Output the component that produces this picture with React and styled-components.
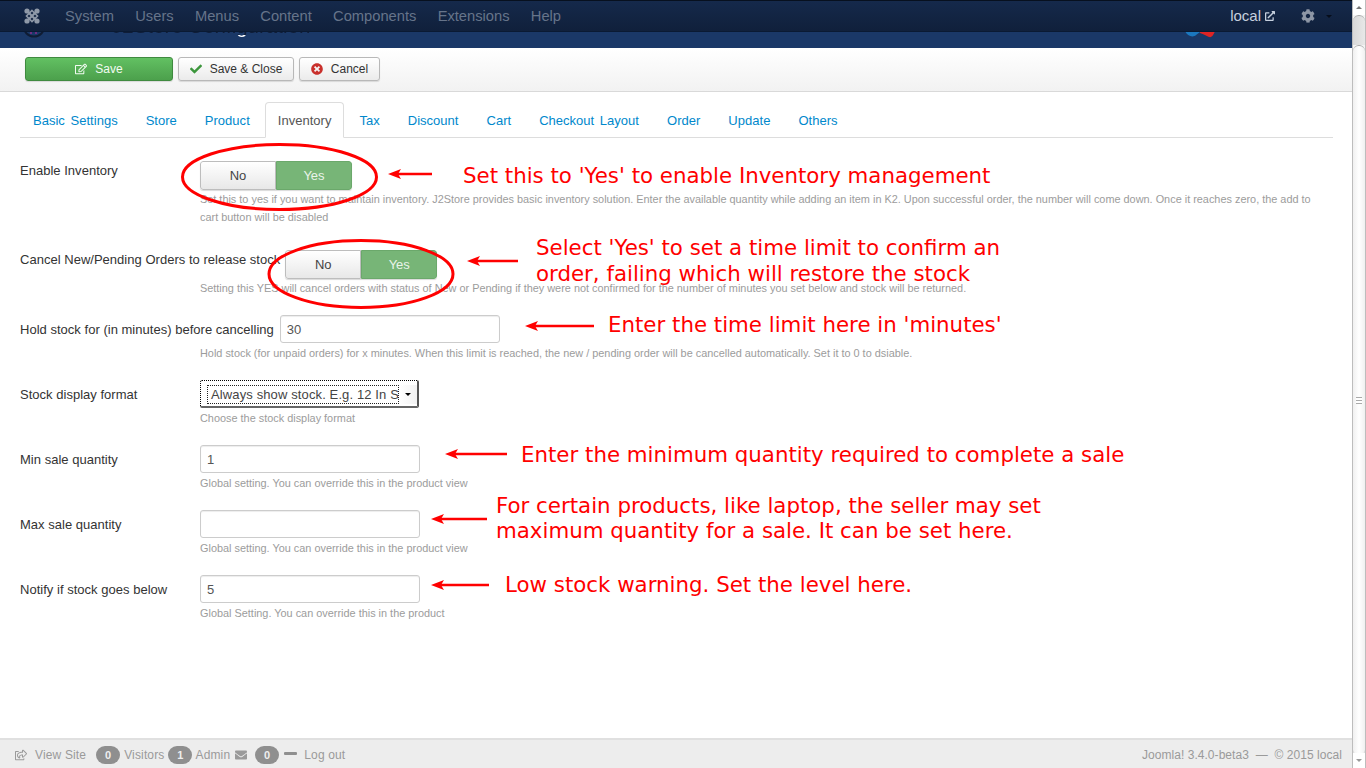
import React from 'react';
import styled, { createGlobalStyle } from 'styled-components';
import { FaCog, FaCheck, FaTimesCircle, FaRegEdit, FaEnvelope, FaRegShareSquare, FaExternalLinkAlt } from 'react-icons/fa';

const Global = createGlobalStyle`
  html, body { margin: 0; padding: 0; height: 100%; overflow: hidden; background: #fff; }
  body { font-family: "Liberation Sans", Arial, sans-serif; font-size: 13px; color: #333; }
  * { box-sizing: border-box; }
`;

const Shell = styled.div`
  display: flex;
  width: 1366px;
  height: 768px;
  position: relative;
  overflow: hidden;
`;
const Page = styled.div`
  flex: 1;
  min-width: 0;
  display: flex;
  flex-direction: column;
`;

/* fixed admin navbar lying over the scrolled page header */
const NavBar = styled.nav`
  position: absolute;
  top: 0;
  left: 0;
  right: 14px;
  height: 32px;
  z-index: 3;
  display: flex;
  align-items: center;
  padding: 0 0 1px 24px;
  border-top: 1px solid #07101f;
  border-bottom: 1px solid #0a1a33;
  background: linear-gradient(#15294b, #10203b);
`;
const Brand = styled.svg`
  width: 16px;
  height: 16px;
  margin-right: 25px;
  flex: none;
`;
const NavItem = styled.a`
  font-size: 14.7px;
  color: #66748a;
  margin-right: ${p => p.$gap ?? 21}px;
`;
const NavRight = styled.div`
  margin-left: auto;
  display: flex;
  align-items: center;
  color: #c6d0de;
  font-size: 15px;
`;
const LocalLink = styled.span`
  display: flex;
  align-items: center;
  gap: 4px;
  margin-right: 26px;
  svg { width: 10px; height: 10px; }
`;
const Gear = styled(FaCog)`
  width: 14px;
  height: 14px;
  color: #8d96a5;
`;
const Caret = styled.span`
  width: 0;
  height: 0;
  margin: 2px 20px 0 11px;
  border-left: 3px solid transparent;
  border-right: 3px solid transparent;
  border-top: 3px solid #060d1a;
`;

const Header = styled.header`
  height: 48px;
  flex: none;
  background: #1a3867;
  display: flex;
  align-items: flex-end;
  justify-content: space-between;
  overflow: hidden;
`;
const HeaderLogo = styled.svg`
  width: 24px;
  height: 24px;
  margin: 0 0 10px 22px;
  flex: none;
`;
const HeaderTitle = styled.h1`
  margin: 0 0 10px 66px;
  font-size: 20.5px;
  font-weight: 400;
  line-height: 24px;
  color: transparent;
  background: linear-gradient(#0f1d38 86%, #ffffff 86%);
  -webkit-background-clip: text;
  background-clip: text;
  white-space: nowrap;
  flex: 1;
`;
const HeaderMark = styled.svg`
  width: 32px;
  height: 8px;
  margin: 0 135px 9px 0;
  flex: none;
`;

const Toolbar = styled.div`
  flex: none;
  height: 44px;
  display: flex;
  gap: 5px;
  padding: 9px 0 0 25px;
  background: linear-gradient(#ffffff, #f2f2f2);
  border-bottom: 1px solid #d9d9d9;
`;
const ToolButton = styled.button`
  height: 24px;
  width: ${p => p.$w}px;
  padding: 0;
  display: flex;
  align-items: center;
  justify-content: center;
  gap: 8px;
  font: 12px "Liberation Sans", Arial, sans-serif;
  border-radius: 3px;
  color: ${p => (p.$primary ? '#f2fbf2' : '#333')};
  border: 1px solid ${p => (p.$primary ? '#3f8a3f' : '#b8b8b8')};
  background: ${p => (p.$primary ? 'linear-gradient(#62c062, #4ca04c)' : 'linear-gradient(#ffffff, #ebebeb)')};
  box-shadow: 0 1px 1px rgba(0, 0, 0, 0.12);
  svg { width: 12px; height: 12px; color: ${p => p.$icon || 'inherit'}; }
`;

const Content = styled.main`
  flex: 1;
  padding: 10px 19px 0 20px;
`;
const Tabs = styled.ul`
  display: flex;
  list-style: none;
  margin: 0 0 23px;
  padding: 0;
  height: 36px;
  border-bottom: 1px solid #ddd;
`;
const Tab = styled.li`
  height: 36px;
  padding: 0 12px;
  margin-right: 2px;
  line-height: 36px;
  font-size: 13px;
  letter-spacing: 0.02px;
  word-spacing: 2px;
  border: 1px solid ${p => (p.$active ? '#ddd' : 'transparent')};
  border-bottom-color: ${p => (p.$active ? '#fff' : 'transparent')};
  border-radius: 4px 4px 0 0;
  color: ${p => (p.$active ? '#555' : '#0088cc')};
  background: ${p => (p.$active ? '#fff' : 'transparent')};
`;

const Row = styled.div`
  margin-bottom: ${p => p.$mb}px;
`;
const Controls = styled.div`
  display: flex;
  align-items: flex-start;
`;
const Label = styled.label`
  min-width: 175px;
  margin-right: ${p => p.$gap ?? 5}px;
  padding-top: ${p => (p.$field ? 6 : 1)}px;
  line-height: 18px;
  font-size: 13px;
  letter-spacing: 0.02px;
  color: #333;
  white-space: nowrap;
`;
const Help = styled.p`
  margin: ${p => p.$mt ?? 1}px 6px 0 180px;
  font-size: 10.9px;
  line-height: 18px;
  color: #9c9c9c;
`;
const Toggle = styled.div`
  display: flex;
  width: 152px;
  height: 29px;
  border-radius: 3px;
  overflow: hidden;
  box-shadow: 0 1px 1px rgba(0, 0, 0, 0.15);
`;
const ToggleOption = styled.span`
  flex: 1;
  display: flex;
  align-items: center;
  justify-content: center;
  font-size: 13px;
  color: ${p => (p.$on ? '#e9f3e9' : '#444')};
  background: ${p => (p.$on ? '#77b577' : 'linear-gradient(#ffffff, #e8e8e8)')};
  border: 1px solid ${p => (p.$on ? '#6ba86b' : '#bdbdbd')};
  border-radius: ${p => (p.$on ? '0 3px 3px 0' : '3px 0 0 3px')};
`;
const TextInput = styled.input`
  width: 220px;
  height: 28px;
  padding: 4px 6px;
  font: 13px "Liberation Sans", Arial, sans-serif;
  color: #555;
  background: #fff;
  border: 1px solid #ccc;
  border-radius: 3px;
  box-shadow: inset 0 1px 1px rgba(0, 0, 0, 0.075);
  outline: none;
`;
const SelectBox = styled.div`
  width: 219px;
  height: 28px;
  display: flex;
  align-items: stretch;
  padding: 4px 0 2px 6px;
  border: 1px dotted #000;
  border-radius: 2px;
  border-right: 2px solid #555;
  border-bottom: 2px solid #666;
  background: #fff;
`;
const SelectValue = styled.span`
  flex: 1;
  min-width: 0;
  overflow: hidden;
  white-space: nowrap;
  line-height: 18px;
  padding-left: 3px;
  font-size: 13px;
  letter-spacing: 0.12px;
  color: #444;
  border: 1px dotted #222;
`;
const SelectArrow = styled.span`
  flex: none;
  width: 18px;
  display: flex;
  align-items: center;
  justify-content: center;
  background: linear-gradient(90deg, #fff, #f2f2f2);
  &::before {
    content: '';
    border-left: 3.5px solid transparent;
    border-right: 3.5px solid transparent;
    border-top: 3.5px solid #000;
  }
`;

const Footer = styled.footer`
  flex: none;
  height: 30px;
  display: flex;
  align-items: center;
  padding: 2px 10px 0 15px;
  background: #ededed;
  border-top: 2px solid #e0e0e0;
  font-size: 12px;
  letter-spacing: 0.15px;
  color: #9a9a9a;
`;
const FooterItem = styled.span`
  display: flex;
  align-items: center;
  margin-right: ${p => p.$mr ?? 0}px;
  gap: ${p => p.$gap ?? 0}px;
  svg { width: 12px; height: 12px; }
`;
const Badge = styled.span`
  width: 24px;
  height: 18px;
  display: flex;
  align-items: center;
  justify-content: center;
  border-radius: 9px;
  font-size: 11px;
  font-weight: 700;
  color: #eee;
  background: #8f8f8f;
`;
const Dash = styled.span`
  width: 13px;
  height: 3px;
  margin-bottom: 3px;
  border-radius: 1px;
  background: #8f8f8f;
`;
const Copyright = styled.span`
  margin-left: auto;
  letter-spacing: 0.05px;
`;

const Scrollbar = styled.aside`
  flex: none;
  width: 14px;
  display: flex;
  flex-direction: column;
  background: #f4f4f4;
  border-left: 1px solid #bdbdbd;
  border-right: 1px solid #bdbdbd;
`;
const ScrollButton = styled.span`
  flex: none;
  height: 15px;
  display: flex;
  align-items: center;
  justify-content: center;
  background: #fff;
  &::before {
    content: '';
    border-left: 3px solid transparent;
    border-right: 3px solid transparent;
    ${p => (p.$down ? 'border-top: 3px solid #999;' : 'border-bottom: 3px solid #777;')}
  }
`;
const ScrollTrough = styled.span`
  flex: none;
  height: 30px;
  background: linear-gradient(90deg, #d8d8d8, #e8e8e8);
  border-radius: 6px 6px 0 0;
  border-top: 1px solid #a8a8a8;
`;
const ScrollThumb = styled.span`
  flex: 1;
  display: flex;
  align-items: center;
  justify-content: center;
  margin-bottom: -3px;
  border-top: 1px solid #a8a8a8;
  border-bottom: 1px solid #a8a8a8;
  border-radius: 6px;
  background: linear-gradient(90deg, #f0f0f0, #ffffff 50%, #f0f0f0);
`;
const Grip = styled.span`
  width: 6px;
  height: 7px;
  border-top: 1px solid #aaa;
  border-bottom: 1px solid #aaa;
  background: linear-gradient(#fff 2px, #aaa 2px, #aaa 3px, #fff 3px);
`;

/* red hand-drawn annotations lying over the form */
const Markup = styled.svg`
  position: absolute;
  inset: 0;
  z-index: 2;
  pointer-events: none;
`;
const Note = styled.div`
  position: absolute;
  z-index: 2;
  left: ${p => p.$x}px;
  top: ${p => p.$y}px;
  font-family: "DejaVu Sans", sans-serif;
  font-size: 21.33px;
  line-height: ${p => p.$lh ?? 26}px;
  color: #ff0000;
  white-space: pre;
`;

const NAV = ['System', 'Users', 'Menus', 'Content', 'Components', 'Extensions', 'Help'];
const TABS = ['Basic Settings', 'Store', 'Product', 'Inventory', 'Tax', 'Discount', 'Cart', 'Checkout Layout', 'Order', 'Update', 'Others'];
const ARROWS = [[432, 388, 174], [518, 467, 261], [594, 525, 326], [507, 445, 454], [487, 431, 519], [489, 431, 585]];
const NOTES = [
  [463, 163, "Set this to 'Yes' to enable Inventory management"],
  [536, 235, "Select 'Yes' to set a time limit to confirm an\norder, failing which will restore the stock"],
  [608, 312, "Enter the time limit here in 'minutes'"],
  [521, 442, 'Enter the minimum quantity required to complete a sale'],
  [496, 493, 'For certain products, like laptop, the seller may set\nmaximum quantity for a sale. It can be set here.', 25],
  [505, 572, 'Low stock warning. Set the level here.'],
];

const YesNo = () => (
  <Toggle>
    <ToggleOption>No</ToggleOption>
    <ToggleOption $on>Yes</ToggleOption>
  </Toggle>
);

export default function App() {
  return (
    <Shell>
      <Global />
      <NavBar>
        <Brand viewBox="0 0 16 16">
          <g stroke="#8f99a8" fill="none" strokeLinecap="round">
            <path d="M3 3 L13 13 M13 3 L3 13" strokeWidth="2.2" />
            <path d="M8 2.5 L13.5 8 L8 13.5 L2.5 8 Z" strokeWidth="1.6" />
          </g>
          <g fill="#8f99a8">
            <circle cx="3" cy="3" r="2.6" />
            <circle cx="13" cy="3" r="2.6" />
            <circle cx="3" cy="13" r="2.6" />
            <circle cx="13" cy="13" r="2.6" />
          </g>
        </Brand>
        {NAV.map(n => <NavItem key={n} $gap={21.3}>{n}</NavItem>)}
        <NavRight>
          <LocalLink>local <FaExternalLinkAlt /></LocalLink>
          <Gear />
          <Caret />
        </NavRight>
      </NavBar>
      <Page>
        <Header>
          <HeaderLogo viewBox="0 0 24 24">
            <circle cx="12" cy="12" r="10.5" fill="#1a3867" stroke="#0f1c33" strokeWidth="2" />
            <circle cx="9" cy="19" r="1" fill="#8a2a8a" />
            <circle cx="14" cy="19" r="1" fill="#8a2a8a" />
          </HeaderLogo>
          <HeaderTitle>J2Store Configuration</HeaderTitle>
          <HeaderMark viewBox="0 0 32 8">
            <path d="M0 0 C2 5 8 7 11 4 L15 1 L15 0 Z" fill="#1b78c0" />
            <path d="M15 0 L30 0 C29 3 27 7 24 6 C21 5 19 3 15 2 Z" fill="#e02424" />
          </HeaderMark>
        </Header>
        <Toolbar>
          <ToolButton $primary $w={148}><FaRegEdit />Save</ToolButton>
          <ToolButton $w={116} $icon="#3c963c"><FaCheck />Save &amp; Close</ToolButton>
          <ToolButton $w={81} $icon="#c9302c"><FaTimesCircle />Cancel</ToolButton>
        </Toolbar>
        <Content>
          <Tabs>
            {TABS.map(t => <Tab key={t} $active={t === 'Inventory'}>{t}</Tab>)}
          </Tabs>
          <Row $mb={24}>
            <Controls>
              <Label>Enable Inventory</Label>
              <YesNo />
            </Controls>
            <Help $mt={0}>Set this to yes if you want to maintain inventory. J2Store provides basic inventory solution. Enter the available quantity while adding an item in K2. Upon successful order, the number will come down. Once it reaches zero, the add to cart button will be disabled</Help>
          </Row>
          <Row $mb={18}>
            <Controls>
              <Label>Cancel New/Pending Orders to release stock</Label>
              <YesNo />
            </Controls>
            <Help $mt={0}>Setting this YES will cancel orders with status of New or Pending if they were not confirmed for the number of minutes you set below and stock will be returned.</Help>
          </Row>
          <Row $mb={18}>
            <Controls>
              <Label $field $gap={6}>Hold stock for (in minutes) before cancelling</Label>
              <TextInput readOnly value="30" />
            </Controls>
            <Help>Hold stock (for unpaid orders) for x minutes. When this limit is reached, the new / pending order will be cancelled automatically. Set it to 0 to dsiable.</Help>
          </Row>
          <Row $mb={18}>
            <Controls>
              <Label $field>Stock display format</Label>
              <SelectBox>
                <SelectValue>Always show stock. E.g. 12 In Stock</SelectValue>
                <SelectArrow />
              </SelectBox>
            </Controls>
            <Help>Choose the stock display format</Help>
          </Row>
          <Row $mb={18}>
            <Controls>
              <Label $field>Min sale quantity</Label>
              <TextInput readOnly value="1" />
            </Controls>
            <Help>Global setting. You can override this in the product view</Help>
          </Row>
          <Row $mb={18}>
            <Controls>
              <Label $field>Max sale quantity</Label>
              <TextInput readOnly value="" />
            </Controls>
            <Help>Global setting. You can override this in the product view</Help>
          </Row>
          <Row $mb={0}>
            <Controls>
              <Label $field>Notify if stock goes below</Label>
              <TextInput readOnly value="5" />
            </Controls>
            <Help>Global Setting. You can override this in the product</Help>
          </Row>
        </Content>
        <Footer>
          <FooterItem $mr={10} $gap={8}><FaRegShareSquare />View Site</FooterItem>
          <FooterItem $mr={4} $gap={4}><Badge>0</Badge>Visitors</FooterItem>
          <FooterItem $mr={5} $gap={3}><Badge>1</Badge>Admin</FooterItem>
          <FooterItem $mr={8}><FaEnvelope /></FooterItem>
          <FooterItem $mr={7} $gap={5}><Badge>0</Badge><Dash /></FooterItem>
          <FooterItem>Log out</FooterItem>
          <Copyright>Joomla! 3.4.0-beta3 &nbsp;— &nbsp;© 2015 local</Copyright>
        </Footer>
      </Page>
      <Scrollbar>
        <ScrollButton />
        <ScrollTrough />
        <ScrollThumb><Grip /></ScrollThumb>
        <ScrollButton $down />
      </Scrollbar>

      <Markup width="1366" height="768" viewBox="0 0 1366 768">
        <g fill="none" stroke="#ff0000" strokeWidth="3">
          <ellipse cx="279.5" cy="177" rx="97" ry="32.5" />
          <ellipse cx="361" cy="274" rx="92" ry="33.5" />
        </g>
        {ARROWS.map(([x1, x2, y]) => (
          <g key={y}>
            <line x1={x1} y1={y} x2={x2 + 6} y2={y} stroke="#ff0000" strokeWidth="2.5" />
            <path d={`M${x2} ${y} L${x2 + 13} ${y - 5} L${x2 + 10} ${y} L${x2 + 13} ${y + 5} Z`} fill="#ff0000" />
          </g>
        ))}
      </Markup>
      {NOTES.map(([x, y, text, lh]) => <Note key={y} $x={x} $y={y} $lh={lh}>{text}</Note>)}
    </Shell>
  );
}
